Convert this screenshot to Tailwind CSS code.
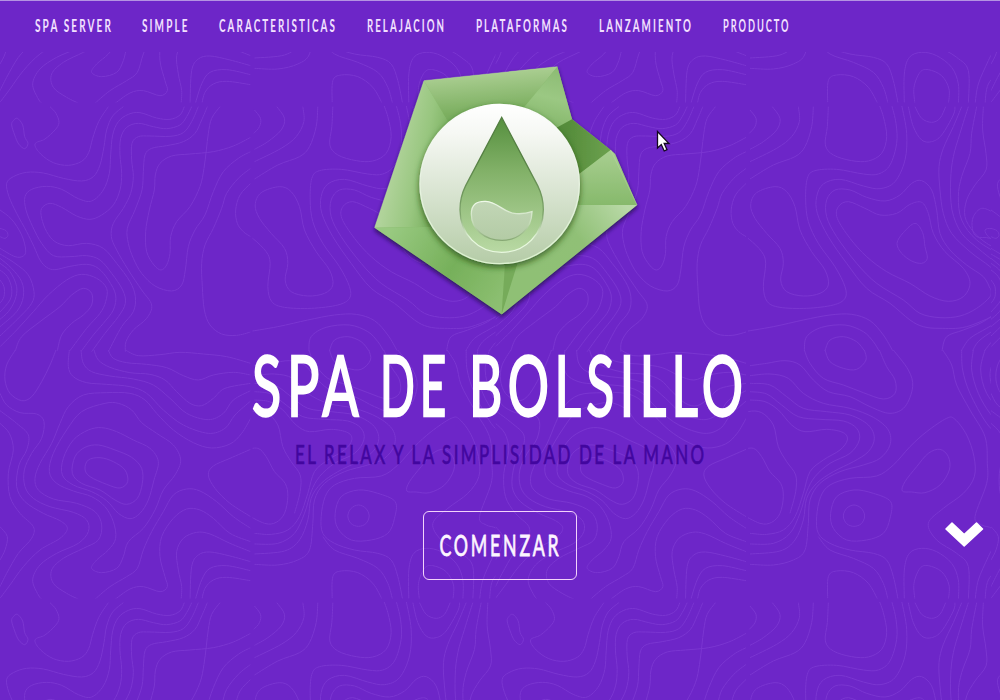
<!DOCTYPE html>
<html lang="es">
<head>
<meta charset="utf-8">
<title>Spa de Bolsillo</title>
<script src="https://cdn.jsdelivr.net/npm/@tailwindcss/browser@4"></script>
</head>
<body class="relative h-[700px] w-[1000px] overflow-hidden bg-[#6d26c8] font-['Lato',sans-serif] text-white">

<!-- Topographic contour backdrop, tiled every 495.5 x 496 -->
<svg class="absolute inset-0" width="1000" height="700" aria-hidden="true">
  <defs>
    <clipPath id="clipL"><rect x="0" y="106" width="250.5" height="492.5"/></clipPath>
    <clipPath id="clipR"><rect x="748" y="106" width="243" height="492.5"/></clipPath>
    <clipPath id="page"><rect x="0" y="52" width="1000" height="648"/></clipPath>
    <g id="tile" fill="none" stroke="#7a36d1" stroke-width="3">
      <g clip-path="url(#clipL)"><g id="A" transform="translate(0 100) scale(.33333)"/><g id="B" transform="translate(0 350) scale(.33333)"/></g>
      <g transform="translate(-495.5 0)"><g clip-path="url(#clipR)"><g id="C" transform="translate(740 100) scale(.33333)"/><g id="D" transform="translate(740 350) scale(.33333)"/></g></g>
    </g>
  </defs>
  <g clip-path="url(#page)">
    <use href="#tile"/><use href="#tile" x="495.5"/><use href="#tile" x="991"/>
    <use href="#tile" y="-496"/><use href="#tile" x="495.5" y="-496"/><use href="#tile" x="991" y="-496"/>
    <use href="#tile" y="496"/><use href="#tile" x="495.5" y="496"/><use href="#tile" x="991" y="496"/>
  </g>
</svg>

<div class="relative flex h-full flex-col">
  <nav class="flex h-[50px] shrink-0 border-t border-[#b493e2] pl-[35px] text-[16.5px] font-bold">
    <a class="mr-[30px] w-[77px]"><svg class="h-[49px] w-full overflow-visible" fill="#f2e0ff"><text y="30.500" letter-spacing="3.5" textLength="78" lengthAdjust="spacingAndGlyphs">SPA SERVER</text></svg></a>
    <a class="mr-[30px] w-[47px]"><svg class="h-[49px] w-full overflow-visible" fill="#f2e0ff"><text y="30.500" letter-spacing="3.5" textLength="47.500" lengthAdjust="spacingAndGlyphs">SIMPLE</text></svg></a>
    <a class="mr-[30px] w-[118px]"><svg class="h-[49px] w-full overflow-visible" fill="#f2e0ff"><text y="30.500" letter-spacing="3.5" textLength="118" lengthAdjust="spacingAndGlyphs">CARACTERISTICAS</text></svg></a>
    <a class="mr-[30px] w-[79px]"><svg class="h-[49px] w-full overflow-visible" fill="#f2e0ff"><text y="30.500" letter-spacing="3.5" textLength="79" lengthAdjust="spacingAndGlyphs">RELAJACION</text></svg></a>
    <a class="mr-[30px] w-[93px]"><svg class="h-[49px] w-full overflow-visible" fill="#f2e0ff"><text y="30.500" letter-spacing="3.5" textLength="93" lengthAdjust="spacingAndGlyphs">PLATAFORMAS</text></svg></a>
    <a class="mr-[30px] w-[94px]"><svg class="h-[49px] w-full overflow-visible" fill="#f2e0ff"><text y="30.500" letter-spacing="3.5" textLength="94" lengthAdjust="spacingAndGlyphs">LANZAMIENTO</text></svg></a>
    <a class="w-[68px]"><svg class="h-[49px] w-full overflow-visible" fill="#f2e0ff"><text y="30.500" letter-spacing="3.5" textLength="67.500" lengthAdjust="spacingAndGlyphs">PRODUCTO</text></svg></a>
  </nav>

  <main class="flex flex-col items-center">
    <svg class="ml-[20px] h-[280px] w-[300px] shrink-0 overflow-visible" viewBox="0 0 900 840">
      <defs>
        <linearGradient id="gTop" gradientUnits="userSpaceOnUse" x1="390" y1="70" x2="400" y2="185"><stop stop-color="#a9cd90"/><stop offset="1" stop-color="#7aae5e"/></linearGradient>
        <linearGradient id="gLeft" gradientUnits="userSpaceOnUse" x1="100" y1="330" x2="265" y2="365"><stop stop-color="#b0d39a"/><stop offset=".5" stop-color="#98c67f"/><stop offset="1" stop-color="#73ab57"/></linearGradient>
        <linearGradient id="gRT" gradientUnits="userSpaceOnUse" x1="600" y1="60" x2="560" y2="230"><stop stop-color="#8dbc74"/><stop offset=".5" stop-color="#9bc883"/><stop offset="1" stop-color="#85b76a"/></linearGradient>
        <linearGradient id="gDark" gradientUnits="userSpaceOnUse" x1="740" y1="290" x2="620" y2="290"><stop stop-color="#6a9f4d"/><stop offset="1" stop-color="#558c3a"/></linearGradient>
        <linearGradient id="gR" x1="0" y1="0" x2="0" y2="1"><stop stop-color="#a9cf91"/><stop offset="1" stop-color="#86b96b"/></linearGradient>
        <linearGradient id="gBR" gradientUnits="userSpaceOnUse" x1="800" y1="470" x2="530" y2="680"><stop stop-color="#b9d9a7"/><stop offset=".5" stop-color="#90c076"/><stop offset="1" stop-color="#8fc075"/></linearGradient>
        <linearGradient id="gBL" gradientUnits="userSpaceOnUse" x1="100" y1="530" x2="430" y2="740"><stop stop-color="#98c980"/><stop offset=".55" stop-color="#76b05a"/><stop offset="1" stop-color="#8cbf71"/></linearGradient>
        <linearGradient id="gCirc" x1="0" y1="0" x2="0" y2="1"><stop stop-color="#fff"/><stop offset=".18" stop-color="#f6f8f4"/><stop offset="1" stop-color="#b5cca7"/></linearGradient>
        <linearGradient id="gCircRim" x1="0" y1="0" x2="0" y2="1"><stop stop-color="#fff"/><stop offset=".4" stop-color="#e9f2e4"/><stop offset="1" stop-color="#dcf2cf"/></linearGradient>
        <linearGradient id="gDrop" x1="0" y1="0" x2="0" y2="1"><stop stop-color="#558f3e"/><stop offset=".4" stop-color="#82b168"/><stop offset="1" stop-color="#b9d9a4"/></linearGradient>
        <linearGradient id="gRim" x1="0" y1="0" x2="0" y2="1"><stop offset=".3" stop-color="#547f42"/><stop offset=".72" stop-color="#7fa56c"/><stop offset=".9" stop-color="#e8f8df"/></linearGradient>
        <linearGradient id="gBlob" x1="0" y1="0" x2="0" y2="1"><stop stop-color="#c2d6b6"/><stop offset="1" stop-color="#b3cba5"/></linearGradient>
        <linearGradient id="gBlobRim" x1="0" y1="0" x2="0" y2="1"><stop stop-color="#eff9e9"/><stop offset=".55" stop-color="#c5dbb8"/><stop offset="1" stop-color="#86a873"/></linearGradient>
        <filter id="sh" x="-10%" y="-10%" width="120%" height="125%"><feDropShadow dx="0" dy="8" stdDeviation="6" flood-color="#1d0b3c" flood-opacity=".75"/></filter>
        <filter id="sh2" x="-15%" y="-15%" width="130%" height="135%"><feDropShadow dx="0" dy="9" stdDeviation="9" flood-color="#234712" flood-opacity=".75"/></filter>
      </defs>
      <g filter="url(#sh)">
        <path fill="#84b768" d="M192 92 592 50 636 208 752 300 765 312 831 465 425 793 44 533Z"/>
        <path fill="url(#gTop)" d="M192 92 592 50 420 260 290 260Z"/>
        <path fill="url(#gLeft)" d="M192 92 290 260 290 529 44 533Z"/>
        <path fill="url(#gRT)" d="M592 50 636 208 560 260 420 260Z"/>
        <path fill="url(#gDark)" d="M636 208 752 300 600 416 540 260Z"/>
        <path fill="url(#gR)" d="M752 300 765 312 831 465 600 466 600 416Z"/>
        <path fill="url(#gBR)" d="M831 465 425 793 480 600 600 465Z"/>
        <path fill="url(#gBL)" d="M44 533 425 793 440 560 260 530Z"/>
        <path fill="#76ab5a" d="M425 793 438 600 485 600Z"/>
        <path d="M192 92 592 50M192 92 44 533M752 300 831 465" fill="none" stroke="#c3e2b0" stroke-opacity=".5" stroke-width="2"/>
      </g>
      <circle cx="419" cy="402" r="239" fill="url(#gCirc)" stroke="url(#gCircRim)" stroke-width="4" filter="url(#sh2)"/>
      <path fill="url(#gDrop)" stroke="url(#gRim)" stroke-width="4" d="M425 202L533 407C545 431 550 450 550 479C550 552 496 607 425 607C354 607 300 552 300 479C300 450 305 431 317 407Z"/>
      <path fill="url(#gBlob)" stroke="url(#gBlobRim)" stroke-width="4" d="M334 492C334 462 352 453 377 454C415 456 432 490 469 491C487 492 502 490 516 485C515 538 474 571 426 571C373 571 334 537 334 492Z"/>
    </svg>

    <h1 class="mt-[10px] h-[90px] w-[500px] text-[84px] font-normal"><svg class="h-full w-full overflow-visible" fill="#fff" stroke="#fff" stroke-width="2.3"><text x="2" y="76.300" letter-spacing="9" textLength="112.500" lengthAdjust="spacingAndGlyphs">SPA</text> <text x="130" y="76.300" letter-spacing="9" textLength="71" lengthAdjust="spacingAndGlyphs">DE</text> <text x="219" y="76.300" letter-spacing="9" textLength="279.500" lengthAdjust="spacingAndGlyphs">BOLSILLO</text></svg></h1>

    <p class="mt-[10px] h-[36px] w-[410px] text-[26.5px] font-normal"><svg class="h-full w-full overflow-visible" fill="#42069f" stroke="#42069f" stroke-width=".7"><text x="0" y="24" letter-spacing="3.800" word-spacing="-1" textLength="411.500" lengthAdjust="spacingAndGlyphs">EL RELAX Y LA SIMPLISIDAD DE LA MANO</text></svg></p>

    <button class="mt-[35px] h-[69px] w-[154px] rounded-md border border-[#f3d3fb] px-[15px] text-[29px] font-normal"><svg class="h-full w-full overflow-visible" fill="#fdf5ff" stroke="#fdf5ff" stroke-width=".8"><text y="43.500" x="0.5" letter-spacing="4.500" textLength="122" lengthAdjust="spacingAndGlyphs">COMENZAR</text></svg></button>
  </main>
</div>

<svg class="absolute left-[945px] top-[521px]" width="39" height="27" viewBox="0 0 39 27"><path d="M7 2 19.200 13.500 31.500 2 37.500 8 19.200 25 1 8Z" fill="#fff" stroke="#fff" stroke-width="1.500" stroke-linejoin="round"/></svg>
<svg class="absolute left-[656px] top-[130px]" width="15" height="23" viewBox="0 0 15 23"><path d="M1.500 1.500V18L5.300 14.500 8.200 21 11 19.700 8.200 13.500H13Z" fill="#fff" stroke="#14081f" stroke-width="1.300"/></svg>

<script>
// Contour points per quadrant, smoothed into curves; a trailing "z" closes the ring.
const contours = {
A: [
"150 20 168 40 177 68 165 90 135 117 105 132 122 162 160 188 205 196 245 184 266 158 278 115 296 65 325 20",
"40 62 52 55 68 75 74 110 84 130 74 146 56 132 44 105 35 75 40 62z",
"370 20 338 48 320 90 312 140 300 195 280 230 245 243 190 235 130 219 80 217 40 230 20 250 27 290 50 340 80 395 102 440 120 480 140 502 165 509 210 499 260 493 295 505 325 540 347 585 340 630 310 670 280 705 245 752",
"553 20 540 45 510 58 470 54 420 38 385 43 355 65 338 105 332 165 328 220 310 270 275 303 235 296 185 268 140 259 95 268 75 290 78 330 98 380 125 430 160 467 210 470 260 467 300 480 335 520 368 570 376 610 355 650 315 700 275 755",
"575 20 560 50 540 75 500 86 460 80 415 70 380 82 362 115 360 165 365 220 360 270 340 315 305 345 270 358 230 348 185 322 150 310 125 325 125 355 140 395 165 425 205 437 260 430 310 445 350 490 390 545 406 590 400 635 365 680 325 755",
"595 20 575 65 550 98 510 109 450 108 415 110 396 130 395 180 400 230 392 280 370 325 340 370 334 410 350 450 385 510 425 570 455 615 440 655 400 690 378 725 376 755",
"622 20 605 60 585 100 550 125 500 137 455 145 435 165 430 215 426 270 405 330 382 385 385 430 400 475 425 520 465 558 515 573 545 555 556 510 565 440 585 390 615 345 640 275 670 215 715 175 752 155",
"660 20 635 55 625 100 619 150 612 205 600 260 570 320 530 365 512 410 510 460 500 495 483 510 462 495 440 455 437 395 448 330 463 270 466 225 480 190 515 168 570 162 640 155 700 138 752 112",
"752 205 715 235 680 280 665 325 640 385 615 435 605 490 607 560 613 630 630 675 665 702 710 706 752 696",
"752 250 720 285 707 330 712 370 730 395 752 410",
"0 330 35 358 65 405 77 450 70 468 45 470 0 445",
"0 385 18 392 24 406 15 415 0 410",
"0 462 45 490 85 525 102 575 95 610 60 650 0 708",
"0 475 35 505 65 545 70 590 50 635 0 680",
"0 490 30 515 50 560 45 600 25 635 0 658",
"0 510 22 530 35 565 30 600 0 636",
"0 540 12 560 12 590 0 610",
"0 740 50 690 100 635 145 585 200 540 245 523 290 535 320 565 317 605 300 640 260 685 210 752",
"46 752 65 710 120 665 180 620 215 585 250 565 275 580 275 615 250 645 215 670 185 705 172 752"
],
B: [
"46 0 20 45 15 90 30 130 65 152 95 140 125 95 150 45 168 0",
"208 0 205 50 220 80 260 98 320 103 390 110 440 130 490 180 550 225 625 250 675 235 705 195 752 153",
"243 0 250 40 275 65 330 78 400 87 460 105 510 145 560 190 625 209 670 190 700 150 752 122",
"282 0 295 30 330 52 390 68 450 73 495 90 530 125 570 160 605 167 640 145 675 115 752 100",
"325 0 340 25 380 38 440 43 500 53 550 77 595 90 640 75 700 67 752 75",
"376 0 415 17 480 14 540 7 610 12 680 20 752 40",
"752 205 725 250 690 282 635 294 580 278 520 240 470 190 435 150 390 130 320 128 250 135 205 170 180 220 155 280 120 340 105 385 115 420 160 447 230 460 285 485 305 525 295 570 250 595 190 625 155 660 160 700 200 730 245 752",
"0 130 20 165 60 188 110 192 132 215 125 265 95 310 73 360 75 410 100 445 150 470 220 487 260 510 265 545 235 580 170 610 120 645 98 690 115 735 130 752",
"0 182 50 220 85 255 80 300 57 345 50 410 75 455 130 490 180 512 202 535 180 565 120 600 70 650 30 705 0 745",
"0 220 28 250 40 300 25 370 30 440 60 490 100 530 95 565 55 610 20 670 0 710",
"0 530 22 560 15 600 0 630",
"315 160 355 160 395 180 425 218 470 250 520 285 542 330 525 375 490 420 465 480 430 535 385 575 370 620 350 655 305 668 275 655 290 630 325 600 347 565 340 515 315 470 275 440 220 423 170 400 148 365 160 310 200 240 245 185 315 160z",
"305 233 350 245 400 270 450 295 475 335 462 390 445 450 420 490 390 506 355 490 320 452 275 425 220 405 187 375 190 325 220 270 265 240 305 233z",
"295 285 345 300 395 322 425 355 427 400 412 445 380 463 345 450 300 420 245 400 217 370 225 320 255 292 295 285z",
"300 323 340 335 375 360 383 395 360 414 320 403 270 380 255 357 265 330 300 323z",
"752 298 690 325 640 348 625 375 645 415 690 460 752 500",
"752 535 700 500 650 455 600 423 560 417 520 435 490 485 455 545 430 600 412 655 380 680 330 710 280 752",
"752 575 690 550 640 505 600 480 560 477 520 505 485 560 480 620 495 680 502 710 480 725 430 710 390 717 340 752",
"752 605 690 580 630 552 590 547 550 565 530 605 535 660 545 710 543 752",
"752 635 690 618 630 606 595 615 575 650 570 752",
"752 662 680 647 630 655 605 690 585 752",
"752 692 680 682 640 690 615 715 605 752"
],
C: [
"30 30 48 55 45 80 28 100",
"97 20 120 55 110 90 70 125 30 148",
"175 20 178 65 155 110 110 145 30 185",
"220 20 215 80 195 140 165 170 100 195 30 237",
"265 20 262 80 256 135 280 165 335 182 385 183 425 160 440 110 430 50 412 0",
"455 15 468 70 470 130 450 195 415 222 370 222 290 208 225 212 202 235 197 300 205 365 235 430 285 500 315 560 315 595 280 615 200 625 120 622 82 605 70 560 77 490 65 455 28 418 0 400",
"485 15 500 100 495 180 465 245 420 266 370 258 300 238 250 252 230 290 232 340 265 410 320 490 380 565 450 610 510 660 550 680 600 685 680 680 790 635",
"105 260 140 275 165 320 180 390 215 455 255 510 265 555 240 580 190 588 140 575 122 540 130 490 120 445 80 400 45 355 32 315 50 278 105 260z",
"750 565 730 530 680 495 630 450 600 400 590 330 575 270 545 242 515 250 480 285 435 303 380 292 330 270 285 270 260 300 260 350 290 410 350 490 410 550 490 600 540 640 600 653 660 648 710 625 750 590 752 565",
"325 305 375 325 420 345 470 340 510 313 545 307 565 340 580 400 615 455 670 505 690 550 670 590 625 604 570 588 510 550 440 515 380 470 330 415 292 355 295 320 325 305z",
"525 370 548 398 555 440 562 475 545 490 515 483 485 460 471 430 490 398 525 370z",
"525 20 545 55 575 67 600 55 617 20",
"505 20 520 80 545 120 575 125 605 105 640 45 645 20",
"665 20 640 80 610 145 597 200 600 270 610 340 635 400 690 455 750 500 790 540",
"685 20 660 100 640 170 632 240 636 330 665 400 720 450 790 505",
"710 20 695 100 690 160 665 230 655 290 665 360 710 420 790 470",
"730 20 728 90 738 160 738 210 705 255 680 300 675 350 700 395 740 430 790 455",
"790 440 750 415 710 410 697 385 700 350 725 325 760 338 790 365",
"735 390 755 386 772 403 765 420 745 410 735 390z",
"775 240 766 265 775 305",
"0 697 100 680 190 660 270 645 335 643 390 662 430 705 458 752",
"193 752 200 710 245 682 315 675 370 695 400 725 417 752",
"255 752 270 720 310 710 350 725 373 752",
"606 752 620 710 670 690 730 665 790 620",
"664 752 690 715 740 685 790 655","698 752 720 720 790 672","734 752 760 720 790 700"
],
D: [
"193 0 210 40 250 85 310 105 370 128 430 147 465 130 465 90 440 50 418 0",
"255 0 270 35 310 55 350 58 378 30 373 0",
"30 47 80 40 135 32 180 45 220 90 265 125 330 140 390 170 450 190 495 170 518 110 505 60 460 0",
"30 77 90 72 145 85 190 130 250 160 330 175 400 202 445 240 450 285 420 325 370 345 300 365 240 400 210 450 205 520 195 600 160 630 100 645 30 643",
"30 100 90 105 140 140 190 175 260 185 330 195 385 225 403 265 385 305 340 335 280 365 230 400 200 445 190 510 165 570 120 603 30 612",
"30 125 80 132 125 165 175 200 240 208 310 213 350 235 358 270 330 310 270 340 225 380 200 425 180 490 150 550 100 580 30 582",
"30 150 75 155 115 180 155 225 195 245 260 238 310 248 322 270 300 300 250 330 210 365 190 430 165 500 130 540 80 553 30 550",
"0 205 25 185 65 188 100 225 115 290 140 335 167 375 167 425 150 490",
"0 300 40 295 65 320 90 365 122 400 130 440 120 490 95 517 60 520 0 490",
"475 752 460 680 440 630 400 610 330 600 270 580 235 550 230 500 242 440 270 405 330 385 410 378 460 345 510 290 560 245 620 205 645 208 680 255 702 320 703 380 670 430 610 475 565 520 590 570 650 610 685 650 685 752",
"445 752 430 700 400 655 340 625 270 600 235 560",
"600 298 625 320 628 360 600 405 555 428 515 426 487 423 495 395 530 350 565 310 600 298z",
"342 420 400 430 452 455 450 505 430 550 380 570 320 570 280 535 272 490 290 440 342 420z",
"342 465 364 475 374 498 364 521 342 529 320 521 310 498 320 475 342 465z",
"263 745 265 680 290 663 340 668 385 700 415 752",
"493 752 493 660 508 610 545 595 590 605 635 640 655 690 655 752",
"525 752 522 700 540 655 565 647 605 665 627 705 625 752",
"608 0 635 45 650 105 690 180 735 260 742 340 740 400 705 500 725 525 755 535 770 565 745 620 715 690 705 752",
"665 0 668 60 690 130 740 220 790 270",
"700 0 695 60 715 130 750 190 790 230",
"735 0 722 60 740 130 790 195","765 20 750 70 760 120 790 165","780 350 768 400 780 460","790 640 745 690 735 752"
]};
const NS = "http://www.w3.org/2000/svg";
for (const [id, list] of Object.entries(contours)) {
  const host = document.getElementById(id);
  for (const s of list) {
    const closed = s.endsWith("z");
    const n = s.replace("z", "").split(" ").map(Number);
    const p = [];
    for (let i = 0; i < n.length; i += 2) p.push([n[i], n[i + 1]]);
    if (closed) p.pop();
    const L = p.length;
    const at = i => closed ? p[(i + L) % L] : p[Math.max(0, Math.min(L - 1, i))];
    let d = "M" + p[0];
    for (let i = 0; i < (closed ? L : L - 1); i++) {
      const a = at(i - 1), b = at(i), c = at(i + 1), e = at(i + 2);
      d += "C" + [b[0] + (c[0] - a[0]) / 6, b[1] + (c[1] - a[1]) / 6, c[0] - (e[0] - b[0]) / 6, c[1] - (e[1] - b[1]) / 6, c[0], c[1]];
    }
    const el = document.createElementNS(NS, "path");
    el.setAttribute("d", d);
    host.appendChild(el);
  }
}
</script>
</body>
</html>
